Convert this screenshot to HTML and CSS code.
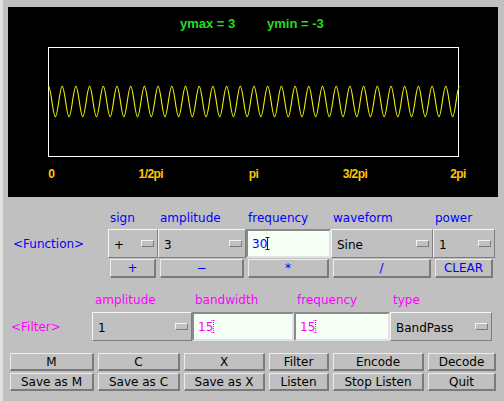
FILE: index.html
```html
<!DOCTYPE html>
<html>
<head>
<meta charset="utf-8">
<title>Signal</title>
<link rel="stylesheet" href="styles.css">
</head>
<body>
<div class="canvas">
  <svg width="490" height="190" viewBox="0 0 490 190">
    <text class="yl" x="172" y="21">ymax = 3</text>
    <text class="yl" x="259" y="21">ymin = -3</text>
    <rect x="40.5" y="40.5" width="410" height="109" fill="none" stroke="#ffffff" stroke-width="1"/>
    <path fill="none" stroke="#f4f400" stroke-width="1.1" d="M40.5,79.2
      c2.49,0 4.36,30.6 6.85,30.6c2.49,0 4.36,-30.6 6.85,-30.6 c2.49,0 4.36,30.6 6.85,30.6c2.49,0 4.36,-30.6 6.85,-30.6 c2.49,0 4.36,30.6 6.85,30.6c2.49,0 4.36,-30.6 6.85,-30.6 c2.49,0 4.36,30.6 6.85,30.6c2.49,0 4.36,-30.6 6.85,-30.6 c2.49,0 4.36,30.6 6.85,30.6c2.49,0 4.36,-30.6 6.85,-30.6
      c2.49,0 4.36,30.6 6.85,30.6c2.49,0 4.36,-30.6 6.85,-30.6 c2.49,0 4.36,30.6 6.85,30.6c2.49,0 4.36,-30.6 6.85,-30.6 c2.49,0 4.36,30.6 6.85,30.6c2.49,0 4.36,-30.6 6.85,-30.6 c2.49,0 4.36,30.6 6.85,30.6c2.49,0 4.36,-30.6 6.85,-30.6 c2.49,0 4.36,30.6 6.85,30.6c2.49,0 4.36,-30.6 6.85,-30.6
      c2.49,0 4.36,30.6 6.85,30.6c2.49,0 4.36,-30.6 6.85,-30.6 c2.49,0 4.36,30.6 6.85,30.6c2.49,0 4.36,-30.6 6.85,-30.6 c2.49,0 4.36,30.6 6.85,30.6c2.49,0 4.36,-30.6 6.85,-30.6 c2.49,0 4.36,30.6 6.85,30.6c2.49,0 4.36,-30.6 6.85,-30.6 c2.49,0 4.36,30.6 6.85,30.6c2.49,0 4.36,-30.6 6.85,-30.6
      c2.49,0 4.36,30.6 6.85,30.6c2.49,0 4.36,-30.6 6.85,-30.6 c2.49,0 4.36,30.6 6.85,30.6c2.49,0 4.36,-30.6 6.85,-30.6 c2.49,0 4.36,30.6 6.85,30.6c2.49,0 4.36,-30.6 6.85,-30.6 c2.49,0 4.36,30.6 6.85,30.6c2.49,0 4.36,-30.6 6.85,-30.6 c2.49,0 4.36,30.6 6.85,30.6c2.49,0 4.36,-30.6 6.85,-30.6
      c2.49,0 4.36,30.6 6.85,30.6c2.49,0 4.36,-30.6 6.85,-30.6 c2.49,0 4.36,30.6 6.85,30.6c2.49,0 4.36,-30.6 6.85,-30.6 c2.49,0 4.36,30.6 6.85,30.6c2.49,0 4.36,-30.6 6.85,-30.6 c2.49,0 4.36,30.6 6.85,30.6c2.49,0 4.36,-30.6 6.85,-30.6 c2.49,0 4.36,30.6 6.85,30.6c2.49,0 4.36,-30.6 6.85,-30.6
      c2.49,0 4.36,30.6 6.85,30.6c2.49,0 4.36,-30.6 6.85,-30.6 c2.49,0 4.36,30.6 6.85,30.6c2.49,0 4.36,-30.6 6.85,-30.6 c2.49,0 4.36,30.6 6.85,30.6c2.49,0 4.36,-30.6 6.85,-30.6 c2.49,0 4.36,30.6 6.85,30.6c2.49,0 4.36,-30.6 6.85,-30.6 c2.49,0 4.36,30.6 6.85,30.6c2.49,0 4.36,-30.6 6.85,-30.6"/>
    <text class="ax" x="40.3" y="170.5">0</text>
    <text class="ax mid" x="142.8" y="170.5">1/2pi</text>
    <text class="ax mid" x="245.5" y="170.5">pi</text>
    <text class="ax mid" x="347" y="170.5">3/2pi</text>
    <text class="ax mid" x="450" y="170.5">2pi</text>
  </svg>
</div>

<div class="func">
  <div></div>
  <div class="lbl blue">sign</div>
  <div class="lbl blue">amplitude</div>
  <div class="lbl blue">frequency</div>
  <div class="lbl blue">waveform</div>
  <div class="lbl blue">power</div>

  <div class="title blue">&lt;Function&gt;</div>
  <div class="choice"><span>+</span><span class="ind"></span></div>
  <div class="choice"><span>3</span><span class="ind"></span></div>
  <div class="field blue"><span>30</span><svg class="caret" width="7" height="13" viewBox="0 0 7 13"><path d="M0.5 0.5h4M0.5 12.5h4M2.5 0v13" stroke="#0000ff" stroke-width="1" fill="none"/></svg></div>
  <div class="choice"><span>Sine</span><span class="ind"></span></div>
  <div class="choice"><span>1</span><span class="ind"></span></div>

  <div></div>
  <div class="btn blue">+</div>
  <div class="btn blue">&minus;</div>
  <div class="btn blue">*</div>
  <div class="btn blue">/</div>
  <div class="btn blue">CLEAR</div>
</div>

<div class="filt">
  <div></div>
  <div class="lbl mag">amplitude</div>
  <div class="lbl mag">bandwidth</div>
  <div class="lbl mag">frequency</div>
  <div class="lbl mag">type</div>

  <div class="title mag">&lt;Filter&gt;</div>
  <div class="choice"><span>1</span><span class="ind"></span></div>
  <div class="field mag"><span>15</span><svg class="caret" width="7" height="13" viewBox="0 0 7 13"><path d="M0.5 0.5h4M0.5 12.5h4M2.5 0v13" stroke="#ff00ff" stroke-width="1" stroke-dasharray="1 1" fill="none"/></svg></div>
  <div class="field mag"><span>15</span><svg class="caret" width="7" height="13" viewBox="0 0 7 13"><path d="M0.5 0.5h4M0.5 12.5h4M2.5 0v13" stroke="#ff00ff" stroke-width="1" stroke-dasharray="1 1" fill="none"/></svg></div>
  <div class="choice"><span>BandPass</span><span class="ind"></span></div>
</div>

<div class="actions">
  <div class="btn">M</div>
  <div class="btn">C</div>
  <div class="btn">X</div>
  <div class="btn">Filter</div>
  <div class="btn">Encode</div>
  <div class="btn">Decode</div>
  <div class="btn">Save as M</div>
  <div class="btn">Save as C</div>
  <div class="btn">Save as X</div>
  <div class="btn">Listen</div>
  <div class="btn">Stop Listen</div>
  <div class="btn">Quit</div>
</div>
</body>
</html>
```

FILE: styles.css
```css
html {
  background: #c0c0c0;
}

body {
  margin: 0;
  min-height: 401px;
  box-sizing: border-box;
  border-left: 3px solid #dfe3df;
  font-family: "DejaVu Sans", sans-serif;
  font-size: 12px;
  color: #000;
}

.canvas {
  margin: 7px 0 0 5px;
  width: 490px;
  height: 190px;
  background: #000;
}

.canvas svg {
  display: block;
}

.yl {
  font-family: "Liberation Sans", sans-serif;
  font-weight: bold;
  font-size: 13px;
  fill: #22dd22;
}

.ax {
  font-family: "Liberation Sans", sans-serif;
  font-weight: bold;
  font-size: 12px;
  letter-spacing: -0.6px;
  fill: #ffc800;
}

.ax.mid {
  text-anchor: middle;
}

.blue {
  color: #0000ff;
}

.mag {
  color: #ff00ff;
}

.func {
  display: grid;
  grid-template-columns: 105px 50px 88px 85px 102px 62px;
  grid-template-rows: 31px 29px 19px;
  row-gap: 1px;
}

.filt {
  display: grid;
  grid-template-columns: 89px 100px 102px 96px 102px;
  grid-template-rows: 33px 29px;
  row-gap: 1px;
}

.lbl {
  align-self: end;
  line-height: 14px;
  margin-bottom: 3px;
  padding-left: 2px;
  white-space: nowrap;
}

.filt .lbl {
  margin-bottom: 4px;
  padding-left: 3px;
}

.title {
  align-self: center;
  padding-left: 10px;
  white-space: nowrap;
}

.filt .title {
  padding-left: 8px;
}

.choice {
  display: flex;
  align-items: center;
  justify-content: space-between;
  border: 1px solid;
  border-color: #f4f4f4 #7c7c7c #7c7c7c #f4f4f4;
  padding: 2px 3px 0 5px;
  white-space: nowrap;
}

.ind {
  width: 11px;
  height: 5px;
  margin-top: -2px;
  border: 1px solid;
  border-color: #f4f4f4 #7c7c7c #7c7c7c #f4f4f4;
}

.field {
  display: flex;
  align-items: center;
  background: #f5fff5;
  border: 2px solid;
  border-color: #8a8a8a #e2e2e2 #e2e2e2 #8a8a8a;
  padding-left: 4px;
}

.caret {
  display: block;
  margin-left: -2px;
}

.btn {
  display: flex;
  align-items: center;
  justify-content: center;
  margin: 0 2px;
  border-style: solid;
  border-width: 1px 2px 2px 1px;
  border-color: #ececec #7a7a7a #7a7a7a #ececec;
  line-height: 1;
  white-space: nowrap;
}

.actions {
  display: grid;
  grid-template-columns: 84px 82px 81px 60px 91px 68px;
  grid-template-rows: 18px 18px;
  gap: 2px 4px;
  margin: 12px 0 0 7px;
}

.actions .btn {
  margin: 0;
}
```
